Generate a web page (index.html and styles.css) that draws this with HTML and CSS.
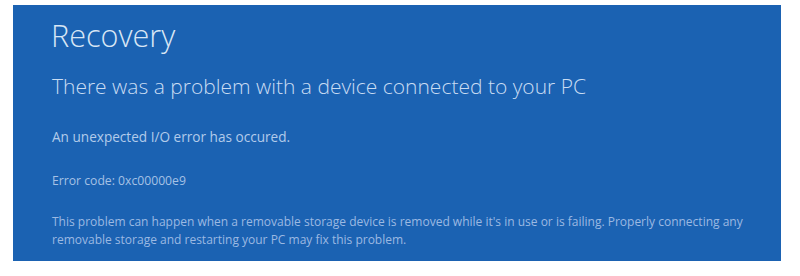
FILE: index.html
```html
<!DOCTYPE html>
<html>
<head>
<meta charset="utf-8">
<link rel="stylesheet" href="styles.css">
</head>
<body>
<div class="screen">
  <h1 class="title">Recovery</h1>
  <h2 class="heading">There was a problem with a device connected to your PC</h2>
  <p class="msg">An unexpected I/O error has occured.</p>
  <p class="code">Error code: 0xc00000e9</p>
  <p class="info">This problem can happen when a removable storage device is removed while it's in use or is failing. Properly connecting any removable storage and restarting your PC may fix this problem.</p>
</div>
</body>
</html>
```
FILE: styles.css
```css
html, body {
  margin: 0;
  padding: 0;
  background: #ffffff;
}
.screen {
  box-sizing: border-box;
  margin: 5px 0 0 13px;
  width: 768px;
  height: 256px;
  background: #1b62b2;
  padding: 0 20px 0 39px;
  font-family: "Open Sans", "Noto Sans", sans-serif;
  display: flex;
  flex-direction: column;
}
.title {
  margin: 12px 0 0 -1px;
  font-size: 30.6px;
  line-height: 36px;
  font-weight: 300;
  color: #d8e6f5;
}
.heading {
  margin: 19px 0 0 0;
  font-size: 21px;
  line-height: 28px;
  font-weight: 300;
  color: #c9dcf2;
}
.msg {
  margin: 28px 0 0 0;
  font-size: 13.6px;
  line-height: 18px;
  font-weight: 400;
  color: #b2cbea;
}
.code {
  margin: 27px 0 0 0;
  font-size: 12.2px;
  line-height: 16px;
  color: #a5c1e5;
}
.info {
  margin: 24px 0 0 0;
  font-size: 12px;
  line-height: 18px;
  color: #9bb9e2;
}
```
